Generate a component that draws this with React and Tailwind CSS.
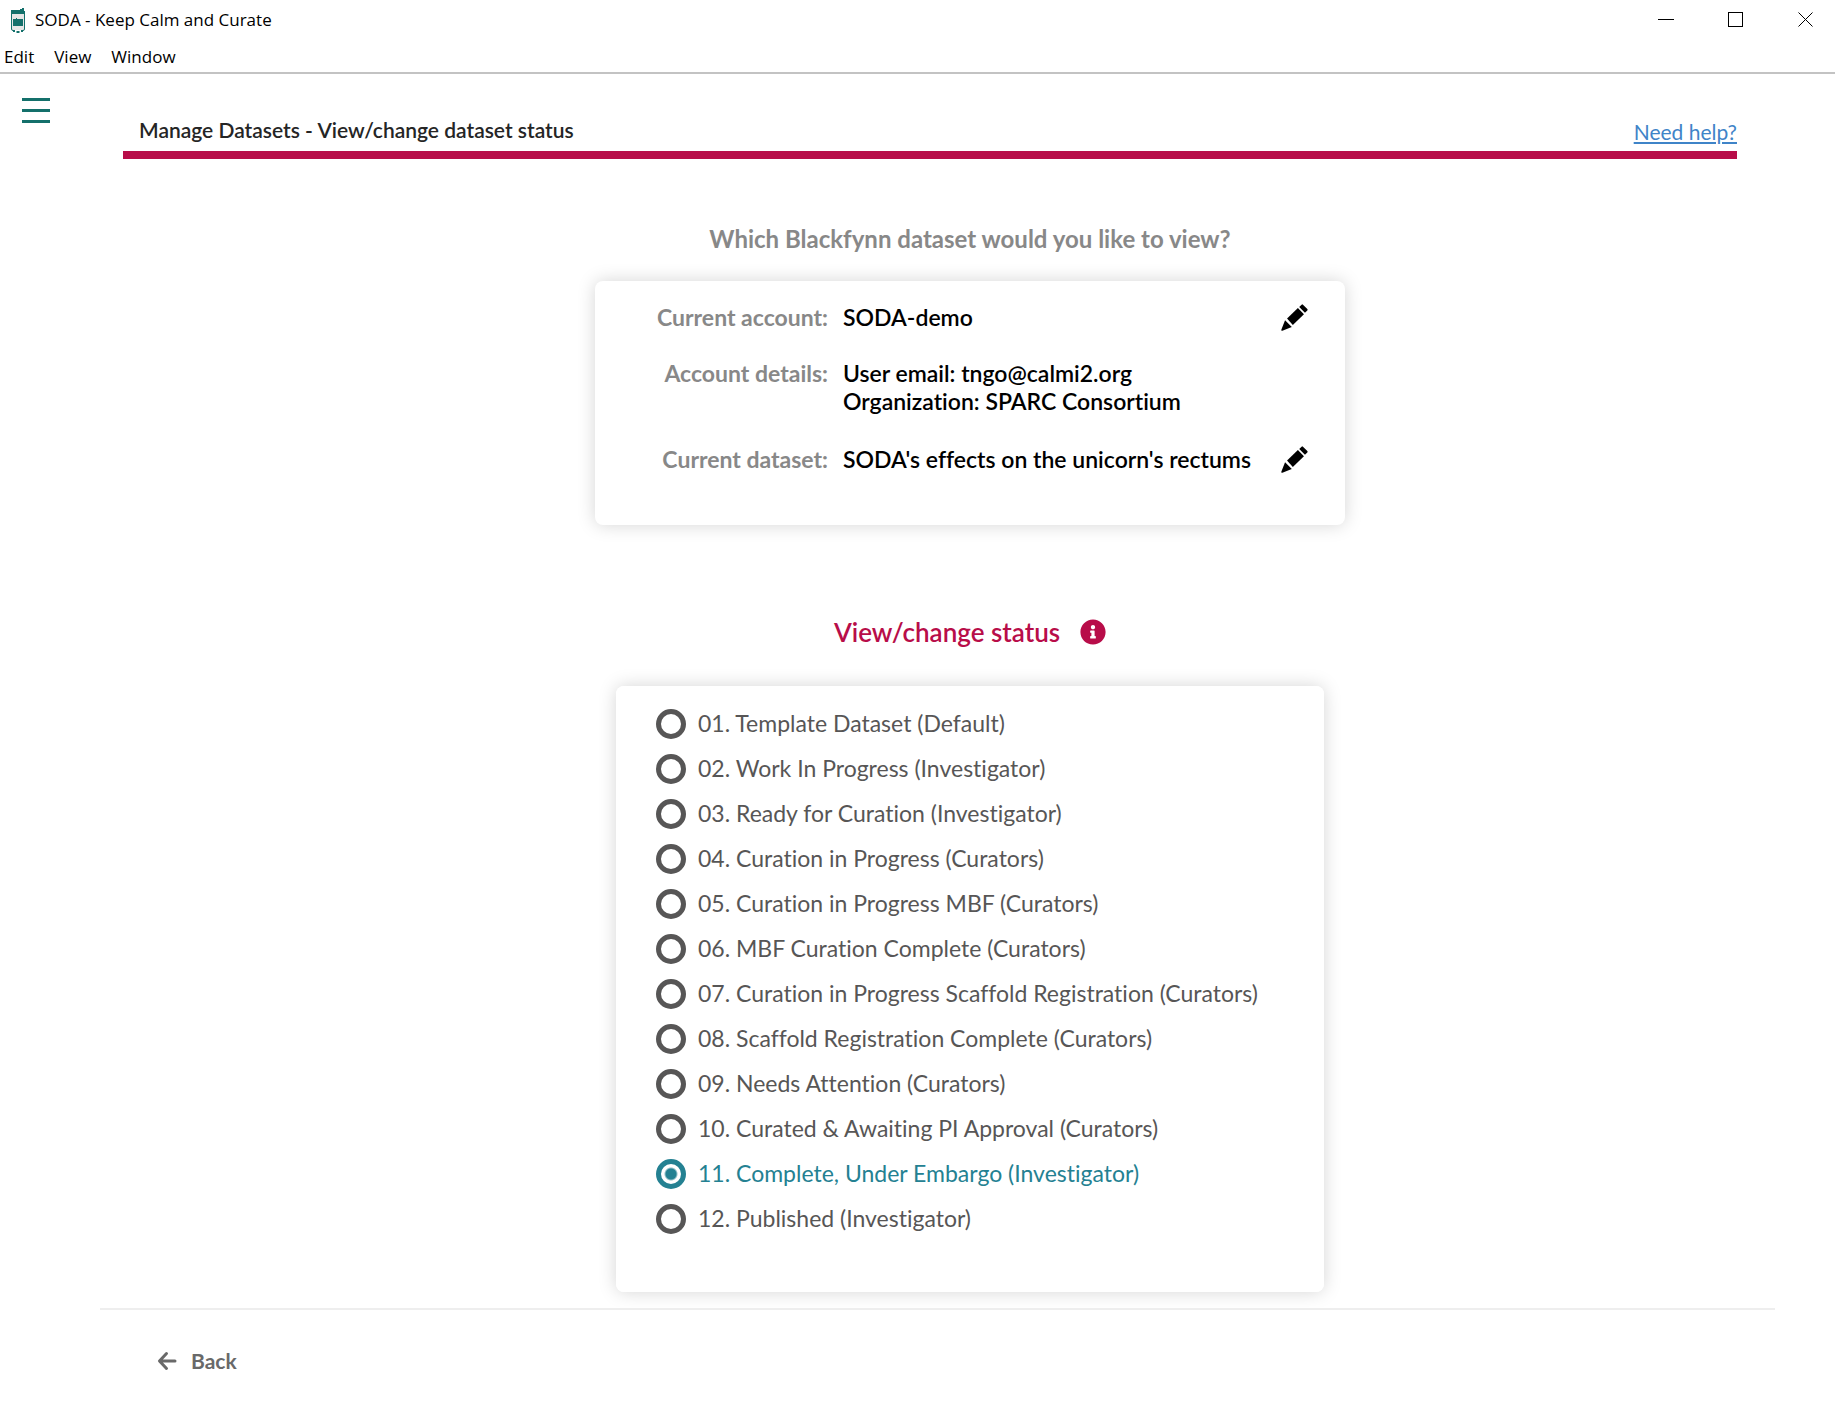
import { useState } from "react";
import { FaInfoCircle } from "react-icons/fa";

const STATUSES = [
  "01. Template Dataset (Default)",
  "02. Work In Progress (Investigator)",
  "03. Ready for Curation (Investigator)",
  "04. Curation in Progress (Curators)",
  "05. Curation in Progress MBF (Curators)",
  "06. MBF Curation Complete (Curators)",
  "07. Curation in Progress Scaffold Registration (Curators)",
  "08. Scaffold Registration Complete (Curators)",
  "09. Needs Attention (Curators)",
  "10. Curated & Awaiting PI Approval (Curators)",
  "11. Complete, Under Embargo (Investigator)",
  "12. Published (Investigator)",
];

function SodaLogo() {
  return (
    <svg viewBox="0 0 16 26" className="h-[26px] w-4" aria-hidden="true">
      <rect x="1.5" y="4.5" width="13" height="19" rx="1.5" fill="#e6e6e6" stroke="#14706b" />
      <path d="M1 3h9V2h2V1h2v3h1v2h-1v1H2V6H1z" fill="#14706b" />
      <path d="M3 12h3v-1h1v1h6v7H3z" fill="#14706b" />
      <path d="M5 23.500h6" stroke="white" strokeWidth="1" />
      <path d="M3 24h2M11 24h2M6.500 25h3" fill="none" stroke="#14706b" strokeWidth="2" />
    </svg>
  );
}

function PencilIcon() {
  return (
    <svg viewBox="0 0 80 80" className="size-[27px]" aria-hidden="true">
      <path d="M54 9l7-7q2-2 4 0l13 13q2 2 0 4l-7 7z" />
      <path d="M18 43l32-31 18 18-33 32z" />
      <path d="M12 48l20 20-28 11q-4 1-3-3z" />
    </svg>
  );
}

function BackArrow() {
  return (
    <svg viewBox="0 0 20 20" className="size-5" fill="none" stroke="currentColor" strokeWidth="3" strokeLinecap="round" strokeLinejoin="round" aria-hidden="true">
      <path d="M9.500 2.500L2.500 10l7 7.500M3 10h15" />
    </svg>
  );
}

function TitleBar() {
  return (
    <header className="border-b-2 border-[#c3c3c3] font-['Open_Sans',sans-serif] text-black">
      <div className="flex h-10 items-center justify-between pl-[10px] pr-[21px]">
        <div className="flex items-center gap-[9px]">
          <SodaLogo />
          <span className="text-[17px] leading-6">SODA - Keep Calm and Curate</span>
        </div>
        <div className="flex items-center gap-[54px]">
          <button type="button" aria-label="Minimize">
            <svg viewBox="0 0 16 16" className="size-4" stroke="black" shapeRendering="crispEdges"><path d="M0 7.500h16" /></svg>
          </button>
          <button type="button" aria-label="Maximize">
            <svg viewBox="0 0 16 16" className="size-4" fill="none" stroke="black" shapeRendering="crispEdges"><path d="M.5.500h14v14H.5z" /></svg>
          </button>
          <button type="button" aria-label="Close">
            <svg viewBox="0 0 16 16" className="size-4" stroke="black"><path d="M.5.500l14 14M14.500.500l-14 14" /></svg>
          </button>
        </div>
      </div>
      <nav className="flex h-8 gap-5 px-1 text-[17px] leading-[34px]">
        <button type="button">Edit</button>
        <button type="button">View</button>
        <button type="button">Window</button>
      </nav>
    </header>
  );
}

function DetailRow({ label, children, edit }) {
  return (
    <div className="flex text-[23px] leading-7">
      <dt className="w-[202px] shrink-0 text-right font-bold text-[#888]">{label}</dt>
      <dd className="ml-[15px] grow font-semibold text-black">{children}</dd>
      {edit && (
        <dd className="flex h-7 items-center">
          <button type="button" aria-label={edit}>
            <PencilIcon />
          </button>
        </dd>
      )}
    </div>
  );
}

export default function App() {
  const [status, setStatus] = useState(STATUSES[10]);
  return (
    <div className="flex min-h-screen flex-col bg-white font-[Lato,sans-serif] [font-variant-ligatures:none]">
      <TitleBar />
      <div className="flex grow">
        <div className="w-[123px] shrink-0 pl-[22px] pt-6">
          <button type="button" aria-label="Toggle menu" className="flex w-7 flex-col gap-2">
            <span className="h-[3px] w-full bg-[#14706b]" />
            <span className="h-[3px] w-full bg-[#14706b]" />
            <span className="h-[3px] w-full bg-[#14706b]" />
          </button>
        </div>
        <main className="mr-[98px] grow">
          <div className="flex h-[85px] items-end justify-between border-b-8 border-[#b80d49] pb-[5px] pl-4">
            <h1 className="pb-[2px] text-[21px] leading-7 font-semibold text-[#252525]">Manage Datasets - View/change dataset status</h1>
            <a href="#help" className="text-[21px] leading-7 text-[#3f84c8] underline">Need help?</a>
          </div>

          <div className="flex flex-col items-center pl-20">
            <h2 className="mt-16 text-[24px] leading-8 font-bold text-[#888]">Which Blackfynn dataset would you like to view?</h2>
            <dl className="mt-[26px] flex w-[750px] flex-col rounded-lg bg-white pt-[22px] pb-[52px] pl-[31px] pr-[37px] shadow-[0_0_18px_rgba(0,0,0,0.17)]">
              <DetailRow label="Current account:" edit="Change account">SODA-demo</DetailRow>
              <div className="mt-7">
                <DetailRow label="Account details:">
                  User email: tngo@calmi2.org
                  <br />
                  Organization: SPARC Consortium
                </DetailRow>
              </div>
              <div className="mt-[30px]">
                <DetailRow label="Current dataset:" edit="Change dataset">SODA's effects on the unicorn's rectums</DetailRow>
              </div>
            </dl>

            <div className="mt-[91px] flex items-center gap-5 text-[#b80d49]">
              <h2 className="text-[26px] leading-8 font-semibold">View/change status</h2>
              <button type="button" aria-label="About dataset status">
                <FaInfoCircle className="size-[26px]" />
              </button>
            </div>
            <fieldset className="mt-[38px] w-[708px] rounded-lg bg-white px-10 pt-[15px] pb-[51px] shadow-[0_0_18px_rgba(0,0,0,0.17)]">
              {STATUSES.map((name) => (
                <label key={name} className="flex h-[45px] items-center gap-3 text-[23px] leading-7 text-[#575656] has-checked:text-[#248192]">
                  <input
                    type="radio"
                    name="status"
                    checked={status === name}
                    onChange={() => setStatus(name)}
                    className="size-[30px] shrink-0 appearance-none rounded-full border-5 border-current checked:bg-[radial-gradient(circle,currentColor_5px,transparent_7px)]"
                  />
                  <span className="pb-[2px]">{name}</span>
                </label>
              ))}
            </fieldset>
          </div>
        </main>
      </div>
      <footer className="mr-[60px] ml-[100px] mt-4 border-t-2 border-[#eee] pt-9 pb-[33px] pl-[57px]">
        <button type="button" className="flex items-center gap-[14px] text-[21px] leading-[30px] font-bold text-[#696969]">
          <BackArrow />
          Back
        </button>
      </footer>
    </div>
  );
}
